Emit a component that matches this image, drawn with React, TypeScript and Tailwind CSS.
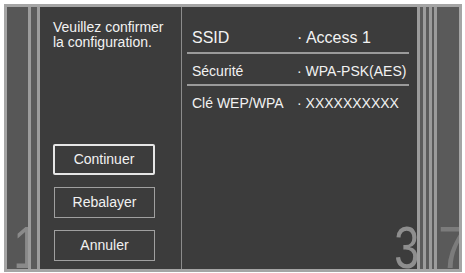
import React from "react";

const ROWS = [
  { label: "Sécurité", value: "WPA-PSK(AES)" },
  { label: "Clé WEP/WPA", value: "XXXXXXXXXX" },
];

const BUTTONS = ["Continuer", "Rebalayer", "Annuler"];

/* big page numbers sitting at the bottom of the strips */
function PageNum({ n, className }: { n: string; className: string }) {
  return (
    <span
      className={`pointer-events-none absolute bottom-[-9px] text-[60px] leading-none ${className}`}
    >
      {n}
    </span>
  );
}

export default function App() {
  return (
    <div className="h-[273px] w-[465px] overflow-hidden bg-white pl-[4px] pt-[4px] font-['Liberation_Sans',Arial,sans-serif]">
      <div className="flex h-[268px] w-[458px] border-[3px] border-[#a5a5a5] bg-[#5a5a5a]">
        {/* ── left strips ─────────────────────────────────────── */}
        <div className="relative w-[21px] overflow-hidden bg-[#575757]">
          <PageNum n="1" className="left-[6px] origin-left scale-x-[0.8] text-[#8a8a8a]" />
        </div>
        <div className="w-[3px] bg-[#9c9c9c]" />
        <div className="w-[6px] bg-[#5b5b5b]" />
        <div className="w-[3px] bg-[#9c9c9c]" />

        {/* ── main panel ──────────────────────────────────────── */}
        <div className="relative flex w-[377px] overflow-hidden bg-[#3c3c3c]">
          {/* left column */}
          <div className="flex w-[142px] flex-col border-r border-[#8c8c8c] pl-[13px] pr-[8px] pt-[13px] pb-[8px]">
            <p className="text-[14px] leading-[15px] text-[#f2f2f2]">
              Veuillez confirmer
              <br />
              la configuration.
            </p>
            <div className="mt-auto flex flex-col gap-[12px]">
              {BUTTONS.map((b, i) => (
                <div
                  key={b}
                  className={
                    i === 0
                      ? "flex h-[31px] w-[102px] items-center justify-center rounded-[2px] border-2 border-[#e6e6e6] text-[14px] text-[#f2f2f2]"
                      : "ml-[1px] flex h-[31px] w-[101px] items-center justify-center border-[1.5px] border-[#a0a0a0] text-[14px] text-[#f2f2f2]"
                  }
                >
                  {b}
                </div>
              ))}
            </div>
          </div>

          {/* right column */}
          <div className="flex-1 pl-[5px] pr-[8px] pt-[22px] text-[#f2f2f2]">
            <div className="flex border-b-2 border-[#9a9a9a] pb-[5px] pl-[5px] text-[16px] leading-[18px]">
              <span className="w-[105px]">SSID</span>
              <span>· Access 1</span>
            </div>
            {ROWS.map((r, i) => (
              <div
                key={r.label}
                className={`flex pl-[5px] pt-[9px] pb-[5px] text-[14px] leading-[16px] ${
                  i === 0 ? "border-b-2 border-[#9a9a9a]" : ""
                }`}
              >
                <span className="w-[105px]">{r.label}</span>
                <span>· {r.value}</span>
              </div>
            ))}
          </div>

          <PageNum n="3" className="right-[-2px] origin-right scale-x-[0.75] text-[#8e8e8e]" />
        </div>

        {/* ── right strips ────────────────────────────────────── */}
        <div className="w-[3px] bg-[#9c9c9c]" />
        <div className="w-[3px] bg-[#5b5b5b]" />
        <div className="w-[3px] bg-[#9c9c9c]" />
        <div className="w-[3px] bg-[#5b5b5b]" />
        <div className="w-[3px] bg-[#9c9c9c]" />
        <div className="w-[2px] bg-[#5b5b5b]" />
        <div className="w-[3px] bg-[#9c9c9c]" />
        <div className="relative flex-1 overflow-hidden bg-[#5a5a5a]">
          <PageNum n="7" className="left-[1px] origin-left scale-x-[0.9] text-[#7c7c7c]" />
        </div>
      </div>
    </div>
  );
}
